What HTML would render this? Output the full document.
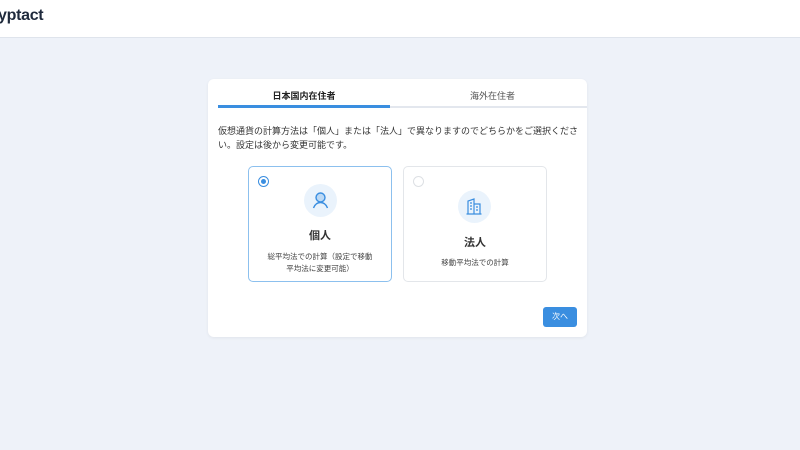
<!DOCTYPE html>
<html><head><meta charset="utf-8"><style>
*{margin:0;padding:0;box-sizing:border-box}
body{width:800px;height:450px;background:#eef2f9;font-family:"Liberation Sans","Noto Sans CJK JP",sans-serif;color:#2d3340;position:relative;overflow:hidden}
.hdr{position:absolute;left:0;top:0;width:800px;height:38px;background:#fff;border-bottom:1px solid #dfe4ec}
.logo{position:absolute;left:-2px;top:7px;font-size:16px;font-weight:bold;color:#1f2a3c;letter-spacing:-0.3px}
.card{position:absolute;left:208px;top:79px;width:379px;height:258px;background:#fff;border-radius:6px;box-shadow:0 1px 3px rgba(0,0,0,.06)}
.tab{position:absolute;top:10px;font-size:9px;text-align:center}
.line{position:absolute;left:10px;top:27px;width:369px;height:2px;background:#e3e7ee}
.act{position:absolute;left:10px;top:26px;width:172px;height:3px;background:#3a8ee0}
.desc{position:absolute;left:10px;top:45px;width:365px;font-size:9px;line-height:14px;color:#333}
.opt{position:absolute;top:87px;width:144px;height:116px;border:1px solid #e3e6ea;border-radius:5px;text-align:center}
.opt.sel{border-color:#8cc0ee}
.radio{position:absolute;left:9px;top:9px;width:11px;height:11px;border-radius:50%;border:1px solid #dde0e4}
.sel .radio{border-color:#3a8ee0}
.sel .radio:after{content:"";position:absolute;left:2px;top:2px;width:5px;height:5px;border-radius:50%;background:#3a8ee0}
.ic{position:absolute;width:33px;height:33px;border-radius:50%;background:#eaf3fc}
.t{position:absolute;width:100%;font-size:11px;font-weight:bold;color:#333}
.s{position:absolute;width:100%;font-size:7.5px;line-height:12px;color:#444}
.btn{position:absolute;left:335px;top:228px;width:34px;height:20px;background:#3a8ee0;border-radius:3px;color:#fff;font-size:8px;text-align:center;line-height:20px}
</style></head><body>
<div class="hdr"><div class="logo">yptact</div></div>
<div class="card">
<div class="tab" style="left:10px;width:172px;font-weight:bold;color:#222">日本国内在住者</div>
<div class="tab" style="left:190px;width:189px;color:#555">海外在住者</div>
<div class="line"></div><div class="act"></div>
<div class="desc">仮想通貨の計算方法は「個人」または「法人」で異なりますのでどちらかをご選択ください。設定は後から変更可能です。</div>
<div class="opt sel" style="left:40px"><div class="radio"></div>
<div class="ic" style="left:55px;top:17px"><svg width="33" height="33" viewBox="0 0 33 33" fill="none" stroke="#3a8ee0" stroke-width="1.4"><circle cx="16.5" cy="13.5" r="4.5" fill="#bcd9f5"/><path d="M9.5 24c1.5-4 4-5.5 7-5.5s5.5 1.5 7 5.5"/></svg></div>
<div class="t" style="top:60px">個人</div>
<div class="s" style="top:84px;padding:0 15px">総平均法での計算（設定で移動平均法に変更可能）</div></div>
<div class="opt" style="left:195px"><div class="radio"></div>
<div class="ic" style="left:54px;top:23px"><svg width="33" height="33" viewBox="0 0 33 33" fill="none" stroke="#3a8ee0" stroke-width="1.2"><path d="M10 24V11l6-2v15M16 14h6v10M8.5 24h15" /><path d="M12 13h2M12 16h2M12 19h2M18 17h2M18 20h2" /></svg></div>
<div class="t" style="top:67px">法人</div>
<div class="s" style="top:90px">移動平均法での計算</div></div>
<div class="btn">次へ</div>
</div>
</body></html>
